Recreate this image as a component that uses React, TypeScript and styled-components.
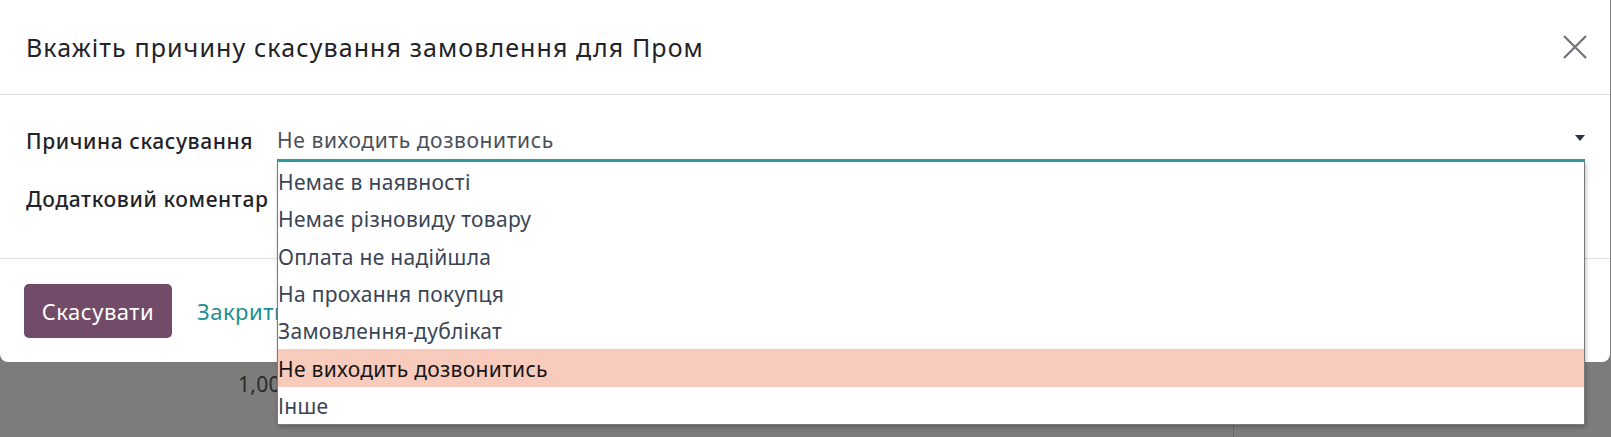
import styled, { createGlobalStyle } from "styled-components";

const GlobalStyle = createGlobalStyle`
    body {
        margin: 0;
        background-color: #7b7c7b;
        font-family: "Noto Sans", "Open Sans", sans-serif;
        overflow: hidden;
    }
`

const Page = styled.div`
    position: relative;
    width: 1611px;
    height: 437px;
    overflow: hidden;
`

// the list page behind the dimmed backdrop
const BehindRow = styled.div`
    display: grid;
    grid-template-columns: 1234px 1fr;
    padding-top: 362px;
    height: 75px;
`

const BehindCell = styled.div<{ $divider?: boolean }>`
    padding: 8px 0 0 238px;
    font-size: 21px;
    letter-spacing: 0.3px;
    color: #2a2a2a;
    border-right: ${({ $divider }) => ($divider ? '1px solid #666866' : 'none')};
`

const Modal = styled.div`
    position: absolute;
    top: 0;
    left: 0;
    width: 1610px;
    height: 362px;
    background-color: #ffffff;
    border-radius: 0 0 8px 8px;
    display: flex;
    flex-direction: column;
`

const Header = styled.div`
    height: 94px;
    border-bottom: 1px solid #dee0e3;
    display: flex;
    align-items: center;
    justify-content: space-between;
    padding: 0 22px 0 26px;
`

const Title = styled.h4`
    margin: 0;
    font-size: 25px;
    font-weight: 400;
    letter-spacing: 1.1px;
    color: #1f2329;
`

const CloseButton = styled.button`
    border: none;
    background: none;
    padding: 0;
    width: 26px;
    height: 26px;
    display: flex;
    align-items: center;
    justify-content: center;
`

const Body = styled.div`
    padding: 26px 25px 39px 26px;
    display: flex;
    flex-direction: column;
    gap: 18px;
`

const FieldRow = styled.div`
    display: grid;
    grid-template-columns: 251px 1fr;
    align-items: center;
    height: 40px;
`

const Label = styled.div`
    font-size: 21px;
    font-weight: 500;
    letter-spacing: 0.6px;
    color: #1f2329;
    white-space: nowrap;
`

const SelectBox = styled.div`
    position: relative;
    height: 40px;
    box-sizing: border-box;
    border-bottom: 2px solid #2f9c9e;
    display: flex;
    align-items: center;
    justify-content: space-between;
`

const SelectValue = styled.span`
    font-size: 21px;
    letter-spacing: 0.6px;
    color: #4a5059;
`

const Caret = styled.svg`
    margin-bottom: 4px;
`

const Listbox = styled.ul`
    position: absolute;
    top: calc(100% + 2px);
    left: 0;
    right: 0;
    height: 264px;
    margin: 0;
    padding: 0;
    list-style: none;
    box-sizing: border-box;
    background-color: #ffffff;
    border: 1px solid #7a7a7a;
    box-shadow: 1px 2px 4px rgba(0, 0, 0, 0.25);
    display: flex;
    flex-direction: column;
    z-index: 2;
`

const Option = styled.li<{ $selected?: boolean }>`
    flex: 1;
    display: flex;
    align-items: center;
    padding: 2px 2px 0 0;
    font-size: 21px;
    letter-spacing: 0.3px;
    color: ${({ $selected }) => ($selected ? '#161616' : '#3a4455')};
    background-color: ${({ $selected }) => ($selected ? '#f8cbbc' : 'transparent')};
`

const CommentBox = styled.div`
    height: 40px;
`

const Footer = styled.div`
    border-top: 1px solid #dee0e3;
    padding: 25px 24px 24px 24px;
    display: flex;
    align-items: center;
    gap: 25px;
`

const PrimaryButton = styled.button`
    height: 54px;
    width: 148px;
    border: none;
    border-radius: 5px;
    background-color: #714b67;
    color: #ffffff;
    font-family: inherit;
    font-size: 22px;
    letter-spacing: 0.5px;
`

const LinkButton = styled.button`
    border: none;
    background: none;
    padding: 0;
    font-family: inherit;
    font-size: 22px;
    letter-spacing: 0.5px;
    color: #1b8f93;
`

const reasons = [
    "Немає в наявності",
    "Немає різновиду товару",
    "Оплата не надійшла",
    "На прохання покупця",
    "Замовлення-дублікат",
    "Не виходить дозвонитись",
    "Інше",
];

const selected = "Не виходить дозвонитись";

function App() {
    return (
        <>
            <GlobalStyle />
            <Page>
                <BehindRow>
                    <BehindCell $divider>1,00</BehindCell>
                    <BehindCell />
                </BehindRow>
                <Modal>
                    <Header>
                        <Title>Вкажіть причину скасування замовлення для Пром</Title>
                        <CloseButton aria-label="Закрити">
                            <svg width="24" height="24" viewBox="0 0 24 24">
                                <path d="M1 1 L23 23 M23 1 L1 23" stroke="#6f7378" strokeWidth="2.2" fill="none" />
                            </svg>
                        </CloseButton>
                    </Header>
                    <Body>
                        <FieldRow>
                            <Label>Причина скасування</Label>
                            <SelectBox>
                                <SelectValue>{selected}</SelectValue>
                                <Caret width="10" height="6" viewBox="0 0 10 6">
                                    <path d="M0 0 H10 L5 6 Z" fill="#2b3340" />
                                </Caret>
                                <Listbox>
                                    {reasons.map((reason) =>
                                        <Option key={reason} $selected={reason === selected}>{reason}</Option>
                                    )}
                                </Listbox>
                            </SelectBox>
                        </FieldRow>
                        <FieldRow>
                            <Label>Додатковий коментар</Label>
                            <CommentBox />
                        </FieldRow>
                    </Body>
                    <Footer>
                        <PrimaryButton>Скасувати</PrimaryButton>
                        <LinkButton>Закрити</LinkButton>
                    </Footer>
                </Modal>
            </Page>
        </>
    );
}

export default App;
